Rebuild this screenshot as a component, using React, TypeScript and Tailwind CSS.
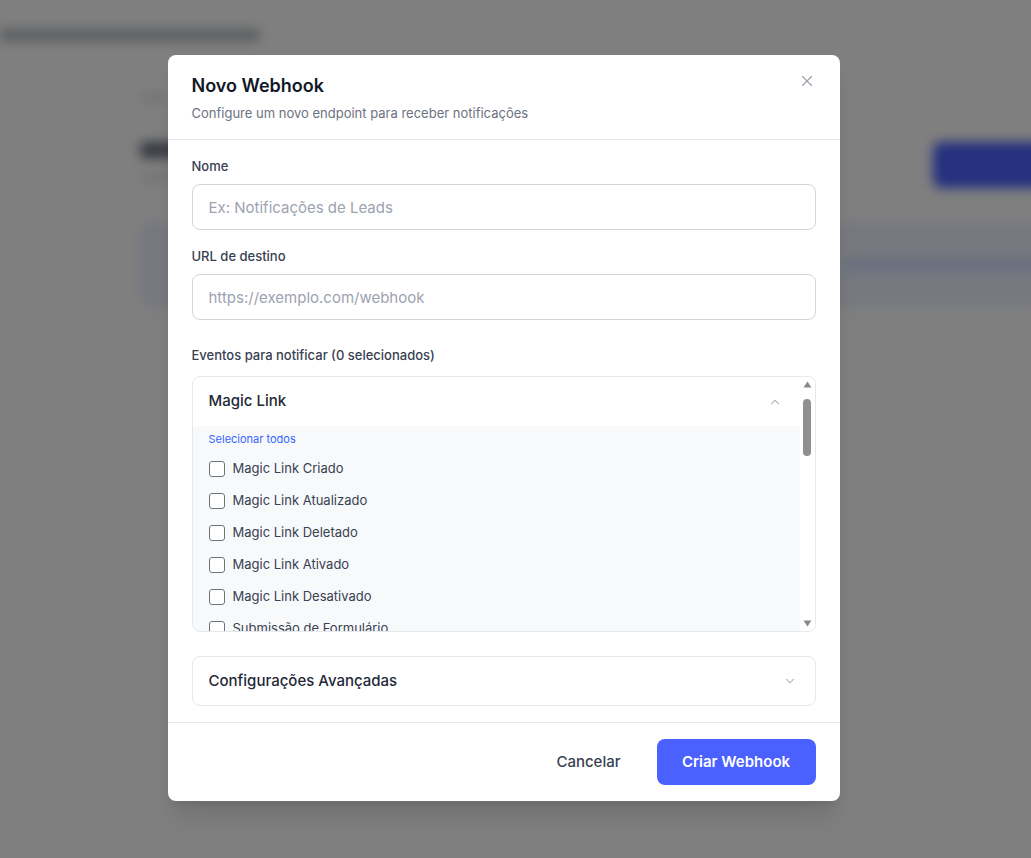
import { X, ChevronUp, ChevronDown } from 'lucide-react';

const SECTIONS = [
  {
    name: 'Magic Link',
    open: true,
    events: [
      'Magic Link Criado',
      'Magic Link Atualizado',
      'Magic Link Deletado',
      'Magic Link Ativado',
      'Magic Link Desativado',
      'Submissão de Formulário',
      'Magic Link Visualizado',
    ],
  },
  {
    name: 'Leads',
    open: true,
    events: ['Lead Criado', 'Lead Atualizado', 'Lead Deletado', 'Lead Convertido', 'Lead Qualificado'],
  },
];

const inputClass =
  'w-full h-[46px] rounded-lg border border-[#d1d5db] bg-white px-4 text-[15px] text-[#111827] placeholder:text-[#9ca3af] focus:outline-none';

function Checkbox() {
  return <span className="w-4 h-4 rounded-[3px] border-[1.5px] border-[#6b7280] bg-white flex-shrink-0" />;
}

function Arrow({ up }: { up?: boolean }) {
  return (
    <svg width="9" height="7" viewBox="0 0 9 7" className="flex-shrink-0">
      <path d={up ? 'M4.5 0.5 L8.5 6.5 L0.5 6.5 Z' : 'M0.5 0.5 L8.5 0.5 L4.5 6.5 Z'} fill="#8a8a8a" />
    </svg>
  );
}

function BackgroundPage() {
  return (
    <div className="w-full h-full bg-white blur-[6px]">
      <div className="h-[70px] flex items-center">
        <div className="h-3 w-[260px] bg-[#b4b8bf] rounded" />
      </div>
      <div className="ml-[140px] w-[960px]">
        <div className="h-2 w-7 bg-[#e5e7eb] rounded mt-6" />
        <div className="flex items-start justify-between mt-10">
          <div>
            <div className="h-4 w-[120px] bg-[#6b7280] rounded" />
            <div className="h-2 w-[200px] bg-[#e5e7eb] rounded mt-4" />
          </div>
          <div className="h-[46px] w-[167px] rounded-lg bg-[#4a60ff]" />
        </div>
        <div className="mt-9 h-[82px] rounded-lg bg-[#eef2ff] border border-[#dbe2fe] flex items-center px-6">
          <div className="ml-[680px] h-2 w-[300px] bg-[#c7d2fe] rounded" />
        </div>
      </div>
    </div>
  );
}

export default function App() {
  return (
    <div className="relative w-[1031px] h-[858px] overflow-hidden font-['Inter',sans-serif]">
      <BackgroundPage />
      <div className="absolute inset-0 bg-black/50 flex items-start justify-center pt-[55px] pr-6">
        <div className="w-[672px] bg-white rounded-lg shadow-xl">
          {/* header */}
          <div className="relative px-6 pt-[17px] pb-4 border-b border-[#e5e7eb]">
            <h2 className="text-[18px] leading-7 font-semibold text-[#111827]">Novo Webhook</h2>
            <p className="mt-[3px] text-[13px] leading-5 text-[#6b7280]">Configure um novo endpoint para receber notificações</p>
            <button className="absolute right-6 top-[17px] text-[#9ca3af]">
              <X className="w-[18px] h-[18px]" strokeWidth={1.75} />
            </button>
          </div>

          {/* body */}
          <div className="px-6 pt-4 pb-4">
            <label className="block text-[13px] leading-5 font-medium text-[#374151]">Nome</label>
            <input className={`${inputClass} mt-2`} placeholder="Ex: Notificações de Leads" />

            <label className="block mt-4 text-[13px] leading-5 font-medium text-[#374151]">URL de destino</label>
            <input className={`${inputClass} mt-2`} placeholder="https://exemplo.com/webhook" />

            <label className="block mt-[25px] text-[13px] leading-5 font-medium text-[#374151]">
              Eventos para notificar (0 selecionados)
            </label>
            <div className="mt-[11px] h-[256px] flex rounded-lg border border-[#e5e7eb] bg-white overflow-hidden">
              <div className="flex-1 min-w-0 overflow-hidden">
                {SECTIONS.map(s => (
                  <div key={s.name}>
                    <div className="h-[49px] flex items-center justify-between pl-4 pr-[18px] bg-white">
                      <span className="text-[15px] font-medium text-[#1f2937]">{s.name}</span>
                      {s.open ? (
                        <ChevronUp className="w-[14px] h-[14px] text-[#9ca3af]" strokeWidth={1.75} />
                      ) : (
                        <ChevronDown className="w-[14px] h-[14px] text-[#9ca3af]" strokeWidth={1.75} />
                      )}
                    </div>
                    {s.open && (
                      <div className="bg-[#f8f9fb] px-4 pt-[3px] pb-2">
                        <button className="block text-[11px] leading-5 text-[#3366ff]">Selecionar todos</button>
                        <div className="mt-1">
                          {s.events.map(ev => (
                            <div key={ev} className="h-8 flex items-center gap-2">
                              <Checkbox />
                              <span className="text-[13px] text-[#374151]">{ev}</span>
                            </div>
                          ))}
                        </div>
                      </div>
                    )}
                  </div>
                ))}
              </div>
              {/* scrollbar */}
              <div className="w-[15px] flex-shrink-0 bg-white flex flex-col items-center pt-[4px] pb-[4px]">
                <Arrow up />
                <div className="mt-[11px] w-[8px] h-[57px] rounded-full bg-[#8f8f8f]" />
                <div className="flex-1" />
                <Arrow />
              </div>
            </div>

            <div className="mt-6 h-[50px] rounded-lg border border-[#e5e7eb] flex items-center justify-between pl-4 pr-[18px]">
              <span className="text-[15px] font-medium text-[#1f2937]">Configurações Avançadas</span>
              <ChevronDown className="w-[14px] h-[14px] text-[#9ca3af]" strokeWidth={1.75} />
            </div>
          </div>

          {/* footer */}
          <div className="border-t border-[#e5e7eb] px-6 pt-4 pb-4 flex items-center justify-end gap-3">
            <button className="h-[46px] px-6 text-[15px] font-medium text-[#374151]">Cancelar</button>
            <button className="h-[46px] w-[159px] rounded-lg bg-[#4a60ff] text-[15px] font-semibold text-white">
              Criar Webhook
            </button>
          </div>
        </div>
      </div>
    </div>
  );
}
